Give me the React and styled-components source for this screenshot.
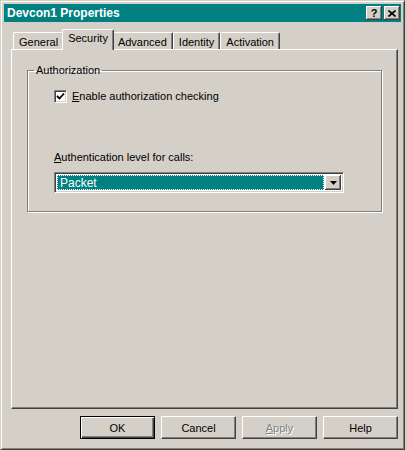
import styled, { createGlobalStyle } from "styled-components";

const GlobalStyle = createGlobalStyle`
  body {
    margin: 0;
    background: #d4d0c8;
    font-family: "Liberation Sans", Arial, sans-serif;
    font-size: 11px;
    color: #000;
  }
`;

const face = "#d4d0c8";

const Window = styled.div`
  width: 405px;
  height: 450px;
  box-sizing: border-box;
  padding: 3px;
  background: ${face};
  border: 1px solid;
  border-color: ${face} #404040 #404040 ${face};
  box-shadow: inset 1px 1px #fff, inset -1px -1px #808080;
  display: flex;
  flex-direction: column;
`;

const TitleBar = styled.div`
  height: 18px;
  background: #008080;
  display: flex;
  align-items: center;
  padding: 0 1px 0 3px;
`;

const Caption = styled.div`
  flex: 1;
  color: #fff;
  font-weight: bold;
  font-size: 12px;
  white-space: nowrap;
`;

const CaptionButton = styled.div`
  width: 16px;
  height: 14px;
  box-sizing: border-box;
  margin-left: ${(p) => (p.$gap ? "2px" : "0")};
  background: ${face};
  box-shadow: inset -1px -1px #404040, inset 1px 1px #fff,
    inset -2px -2px #808080;
  display: flex;
  align-items: center;
  justify-content: center;
  font-weight: bold;
  font-size: 11px;
  line-height: 1;
`;

const TabRow = styled.div`
  display: flex;
  align-items: flex-end;
  height: 20px;
  margin: 7px 0 0 9px;
`;

const Tab = styled.div`
  position: relative;
  box-sizing: border-box;
  height: ${(p) => (p.$active ? "21px" : "17px")};
  margin: ${(p) => (p.$active ? "0 -2px -1px -2px" : "0")};
  padding: ${(p) => (p.$active ? "2px 5px 0 5px" : "3px 5px 0 5px")};
  z-index: ${(p) => (p.$active ? 1 : 0)};
  background: ${face};
  border-top: 1px solid #fff;
  border-left: 1px solid #fff;
  border-right: 1px solid #404040;
  border-radius: 2px 2px 0 0;
  box-shadow: inset -1px 0 #808080;
  white-space: nowrap;
`;

const Panel = styled.div`
  width: 387px;
  height: 360px;
  box-sizing: border-box;
  margin-left: 7px;
  padding: 14px 15px 0 15px;
  border: 1px solid;
  border-color: #fff #404040 #404040 #fff;
  box-shadow: inset -1px -1px #808080;
`;

const Group = styled.fieldset`
  margin: 0;
  padding: 0;
  border: 1px solid #808080;
  box-shadow: inset 1px 1px #fff, 1px 1px #fff;
`;

const Legend = styled.legend`
  margin-left: 6px;
  padding: 0 2px;
  line-height: 13px;
`;

const GroupBody = styled.div`
  padding: 11px 0 18px 26px;
`;

const CheckRow = styled.label`
  display: flex;
  align-items: center;
  height: 16px;
  gap: 5px;
`;

const CheckBox = styled.span`
  width: 13px;
  height: 13px;
  box-sizing: border-box;
  background: #fff;
  border: 1px solid;
  border-color: #808080 #fff #fff #808080;
  box-shadow: inset 1px 1px #404040, inset -1px -1px ${face};
  display: flex;
  align-items: center;
  justify-content: center;
`;

const FieldLabel = styled.div`
  margin-top: 47px;
  line-height: 13px;
`;

const Select = styled.div`
  margin-top: 8px;
  width: 290px;
  height: 21px;
  box-sizing: border-box;
  display: flex;
  border: 1px solid;
  border-color: #808080 #fff #fff #808080;
  box-shadow: inset 1px 1px #404040, inset -1px -1px ${face};
  padding: 2px;
  background: #fff;
`;

const SelectValue = styled.div`
  flex: 1;
  background: #008080;
  color: #fff;
  font-size: 12px;
  outline: 1px dotted #fff;
  outline-offset: -1px;
  padding-left: 3px;
  display: flex;
  align-items: center;
  margin-right: 1px;
`;

const ArrowButton = styled.div`
  width: 16px;
  background: ${face};
  box-shadow: inset -1px -1px #404040, inset 1px 1px #fff,
    inset -2px -2px #808080;
  display: flex;
  align-items: center;
  justify-content: center;
`;

const ButtonRow = styled.div`
  display: flex;
  justify-content: flex-end;
  gap: 6px;
  margin: 7px 3px 0 0;
`;

const Button = styled.div`
  width: 75px;
  height: 23px;
  box-sizing: border-box;
  display: flex;
  align-items: center;
  justify-content: center;
  background: ${face};
  border: 1px solid;
  border-color: ${(p) => (p.$default ? "#000" : "#fff #404040 #404040 #fff")};
  box-shadow: ${(p) =>
    p.$default
      ? "inset 1px 1px #fff, inset -1px -1px #404040, inset -2px -2px #808080"
      : "inset -1px -1px #808080"};
  color: ${(p) => (p.$disabled ? "#808080" : "#000")};
  text-shadow: ${(p) => (p.$disabled ? "1px 1px #fff" : "none")};
`;

const Key = styled.span`
  text-decoration: underline;
`;

export default function App() {
  return (
    <>
      <GlobalStyle />
      <Window>
        <TitleBar>
          <Caption>Devcon1 Properties</Caption>
          <CaptionButton>?</CaptionButton>
          <CaptionButton $gap>
            <svg width="8" height="7" viewBox="0 0 8 7">
              <path d="M0.5 0.5 L7.5 6.5 M7.5 0.5 L0.5 6.5" stroke="#000" strokeWidth="1.6" />
            </svg>
          </CaptionButton>
        </TitleBar>

        <TabRow>
          <Tab>General</Tab>
          <Tab $active>Security</Tab>
          <Tab>Advanced</Tab>
          <Tab>Identity</Tab>
          <Tab>Activation</Tab>
        </TabRow>

        <Panel>
          <Group>
            <Legend>Authorization</Legend>
            <GroupBody>
              <CheckRow>
                <CheckBox>
                  <svg width="9" height="9" viewBox="0 0 9 9">
                    <path d="M1 4 L3.5 6.5 L8 1.5" fill="none" stroke="#000" strokeWidth="1.8" />
                  </svg>
                </CheckBox>
                <span>
                  <Key>E</Key>nable authorization checking
                </span>
              </CheckRow>
              <FieldLabel>
                <Key>A</Key>uthentication level for calls:
              </FieldLabel>
              <Select>
                <SelectValue>Packet</SelectValue>
                <ArrowButton>
                  <svg width="7" height="4" viewBox="0 0 7 4">
                    <path d="M0 0 H7 L3.5 4 Z" fill="#000" />
                  </svg>
                </ArrowButton>
              </Select>
            </GroupBody>
          </Group>
        </Panel>

        <ButtonRow>
          <Button $default>OK</Button>
          <Button>Cancel</Button>
          <Button $disabled>
            <span>
              <Key>A</Key>pply
            </span>
          </Button>
          <Button>Help</Button>
        </ButtonRow>
      </Window>
    </>
  );
}
